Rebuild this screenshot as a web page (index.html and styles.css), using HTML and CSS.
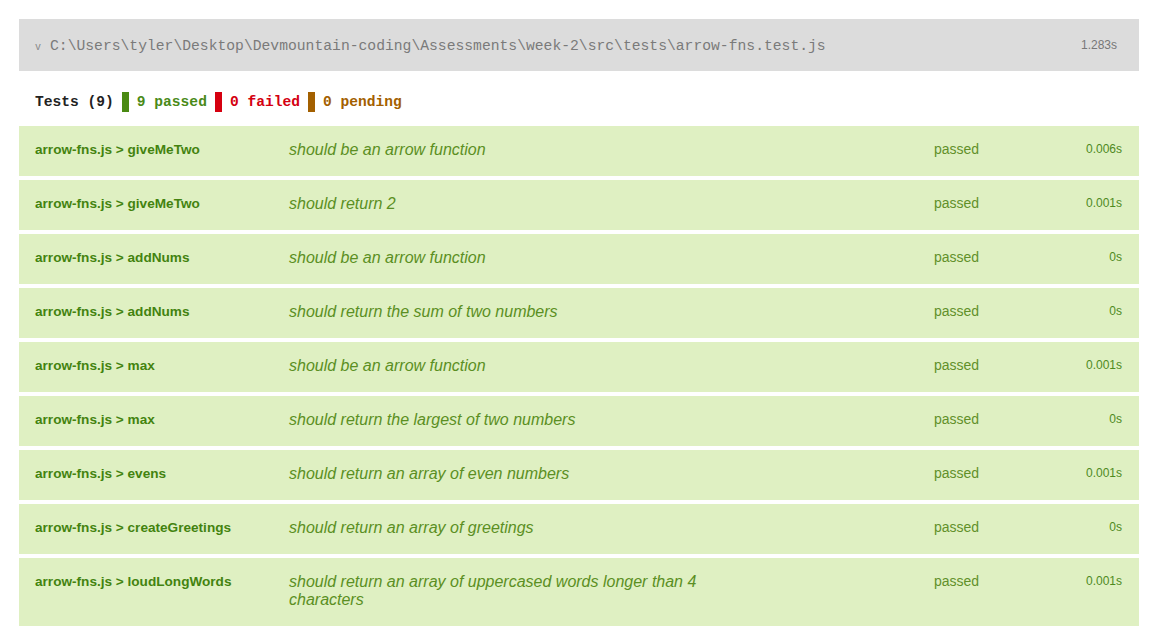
FILE: index.html
```html
<!DOCTYPE html>
<html>
<head>
<meta charset="utf-8">
<link rel="stylesheet" href="styles.css">
</head>
<body>
<div class="suite">
  <div class="suite-header">
    <div class="path"><span class="chev">v</span>C:\Users\tyler\Desktop\Devmountain-coding\Assessments\week-2\src\tests\arrow-fns.test.js</div>
    <div class="time">1.283s</div>
  </div>
  <div class="summary">
    <span class="total">Tests (9)</span>
    <span class="bar bar-pass"></span><span class="pass">9 passed</span>
    <span class="bar bar-fail"></span><span class="fail">0 failed</span>
    <span class="bar bar-pend"></span><span class="pend">0 pending</span>
  </div>
  <div class="tests">
    <div class="test"><div class="name">arrow-fns.js &gt; giveMeTwo</div><div class="title">should be an arrow function</div><div></div><div class="status">passed</div><div class="dur">0.006s</div></div>
    <div class="test"><div class="name">arrow-fns.js &gt; giveMeTwo</div><div class="title">should return 2</div><div></div><div class="status">passed</div><div class="dur">0.001s</div></div>
    <div class="test"><div class="name">arrow-fns.js &gt; addNums</div><div class="title">should be an arrow function</div><div></div><div class="status">passed</div><div class="dur">0s</div></div>
    <div class="test"><div class="name">arrow-fns.js &gt; addNums</div><div class="title">should return the sum of two numbers</div><div></div><div class="status">passed</div><div class="dur">0s</div></div>
    <div class="test"><div class="name">arrow-fns.js &gt; max</div><div class="title">should be an arrow function</div><div></div><div class="status">passed</div><div class="dur">0.001s</div></div>
    <div class="test"><div class="name">arrow-fns.js &gt; max</div><div class="title">should return the largest of two numbers</div><div></div><div class="status">passed</div><div class="dur">0s</div></div>
    <div class="test"><div class="name">arrow-fns.js &gt; evens</div><div class="title">should return an array of even numbers</div><div></div><div class="status">passed</div><div class="dur">0.001s</div></div>
    <div class="test"><div class="name">arrow-fns.js &gt; createGreetings</div><div class="title">should return an array of greetings</div><div></div><div class="status">passed</div><div class="dur">0s</div></div>
    <div class="test"><div class="name">arrow-fns.js &gt; loudLongWords</div><div class="title">should return an array of uppercased words longer than 4 characters</div><div></div><div class="status">passed</div><div class="dur">0.001s</div></div>
  </div>
</div>
</body>
</html>
```
FILE: styles.css
```css
html, body {
  margin: 0;
  padding: 0;
  background: #ffffff;
}
body {
  padding: 19px 16px 0 19px;
  font-family: "Liberation Sans", Arial, sans-serif;
}
.suite {
  width: 1120px;
}
.suite-header {
  background: #dcdcdc;
  height: 52px;
  display: flex;
  align-items: center;
  justify-content: space-between;
  padding: 0 22px 0 16px;
  box-sizing: border-box;
}
.path {
  font-family: "Liberation Mono", Consolas, monospace;
  font-size: 14.7px;
  color: #7a7a7a;
  padding-top: 2px;
}
.chev {
  font-size: 10px;
  margin-right: 9px;
  color: #888;
}
.time {
  font-size: 12px;
  color: #777;
}
.summary {
  display: flex;
  align-items: center;
  height: 20px;
  margin: 21px 0 14px 0;
  padding-left: 16px;
  font-family: "Liberation Mono", Consolas, monospace;
  font-size: 14.6px;
  font-weight: bold;
}
.total { color: #222; margin-right: 8px; }
.bar {
  display: inline-block;
  width: 7px;
  height: 20px;
  margin-right: 8px;
}
.bar-pass { background: #4a8a12; }
.bar-fail { background: #d60010; }
.bar-pend { background: #a36000; }
.pass { color: #4a8a18; margin-right: 8px; }
.fail { color: #d40010; margin-right: 8px; }
.pend { color: #a36000; }
.tests {
  display: flex;
  flex-direction: column;
  gap: 4px;
}
.test {
  background: #dff0c2;
  display: grid;
  grid-template-columns: 254px 425px 1fr 100px 88px;
  align-items: start;
  padding: 15px 17px 17px 16px;
  line-height: 18px;
}
.name {
  font-size: 13.6px;
  font-weight: bold;
  color: #43830f;
}
.title {
  font-size: 16px;
  font-style: italic;
  color: #5b8f23;
}
.status {
  font-size: 14px;
  color: #62902a;
  margin-top: -1px;
}
.dur {
  font-size: 12px;
  color: #4e8a1e;
  text-align: right;
  line-height: 14px;
  margin-top: 1px;
}
```
